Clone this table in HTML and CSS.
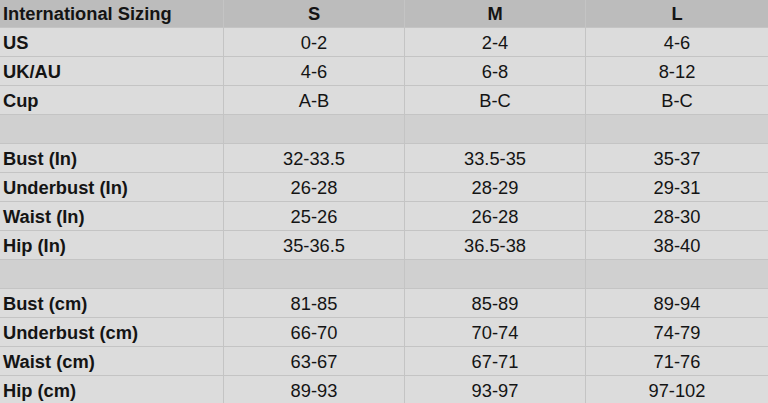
FILE: index.html
```html
<!DOCTYPE html>
<html>
<head>
<meta charset="utf-8">
<link rel="stylesheet" href="styles.css">
</head>
<body>
<div class="chart">
  <div class="cell head label">International Sizing</div>
  <div class="cell head">S</div>
  <div class="cell head">M</div>
  <div class="cell head">L</div>

  <div class="cell label">US</div><div class="cell">0-2</div><div class="cell">2-4</div><div class="cell">4-6</div>
  <div class="cell label">UK/AU</div><div class="cell">4-6</div><div class="cell">6-8</div><div class="cell">8-12</div>
  <div class="cell label">Cup</div><div class="cell">A-B</div><div class="cell">B-C</div><div class="cell">B-C</div>
  <div class="cell gap"></div><div class="cell gap"></div><div class="cell gap"></div><div class="cell gap"></div>
  <div class="cell label">Bust (In)</div><div class="cell">32-33.5</div><div class="cell">33.5-35</div><div class="cell">35-37</div>
  <div class="cell label">Underbust (In)</div><div class="cell">26-28</div><div class="cell">28-29</div><div class="cell">29-31</div>
  <div class="cell label">Waist (In)</div><div class="cell">25-26</div><div class="cell">26-28</div><div class="cell">28-30</div>
  <div class="cell label">Hip (In)</div><div class="cell">35-36.5</div><div class="cell">36.5-38</div><div class="cell">38-40</div>
  <div class="cell gap"></div><div class="cell gap"></div><div class="cell gap"></div><div class="cell gap"></div>
  <div class="cell label">Bust (cm)</div><div class="cell">81-85</div><div class="cell">85-89</div><div class="cell">89-94</div>
  <div class="cell label">Underbust (cm)</div><div class="cell">66-70</div><div class="cell">70-74</div><div class="cell">74-79</div>
  <div class="cell label">Waist (cm)</div><div class="cell">63-67</div><div class="cell">67-71</div><div class="cell">71-76</div>
  <div class="cell label">Hip (cm)</div><div class="cell">89-93</div><div class="cell">93-97</div><div class="cell">97-102</div>
</div>
</body>
</html>
```
FILE: styles.css
```css
html, body {
  margin: 0;
  padding: 0;
  background: #dcdcdc;
  overflow: hidden;
}
.chart {
  display: grid;
  grid-template-columns: 223px 180px 180px 182px;
  grid-template-rows: 27px;
  grid-auto-rows: 28px;
  column-gap: 1px;
  row-gap: 1px;
  background: #c4c4c4;
  width: 768px;
  font-family: "Liberation Sans", Arial, sans-serif;
  font-size: 18.3px;
  color: #141414;
}
.cell {
  background: #dcdcdc;
  display: flex;
  align-items: center;
  justify-content: center;
  white-space: nowrap;
  padding-top: 1px;
}
.head {
  background: #bcbcbc;
  font-weight: bold;
  padding-top: 0;
}
.label {
  justify-content: flex-start;
  padding-left: 3px;
  font-weight: bold;
}
.gap {
  background: #d0d0d0;
}
```
